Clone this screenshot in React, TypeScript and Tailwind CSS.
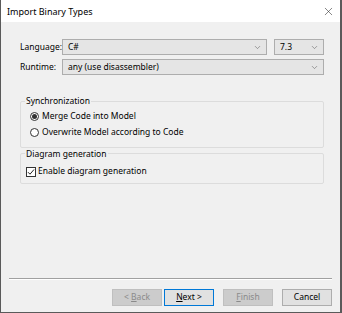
import { X, ChevronDown } from 'lucide-react';

// 콤보박스 (Windows 스타일)
function Combo({ value, className }: { value: string; className?: string }) {
  return (
    <div
      className={`h-[16px] bg-[#e5e5e5] border border-[#adadad] flex items-center justify-between pl-[5px] pr-[4px] ${className ?? ''}`}
    >
      <span className="text-[#000]">{value}</span>
      <ChevronDown size={9} strokeWidth={1.5} className="text-[#606060]" />
    </div>
  );
}

function Radio({ checked, label }: { checked?: boolean; label: string }) {
  return (
    <label className="flex items-center gap-[3px] h-[16px]">
      <span className="w-[9px] h-[9px] rounded-full border border-[#333] bg-white flex items-center justify-center">
        {checked && <span className="w-[5px] h-[5px] rounded-full bg-[#333]" />}
      </span>
      <span>{label}</span>
    </label>
  );
}

function Button({ label, disabled, primary }: { label: React.ReactNode; disabled?: boolean; primary?: boolean }) {
  return (
    <button
      className={`w-[50px] h-[17px] flex items-center justify-center border ${
        disabled
          ? 'bg-[#cccccc] border-[#bfbfbf] text-[#8a8a8a]'
          : primary
          ? 'bg-[#e1e1e1] border-[#0078d7] text-black'
          : 'bg-[#e1e1e1] border-[#adadad] text-black'
      }`}
    >
      {label}
    </button>
  );
}

export default function App() {
  return (
    <div
      className="w-[342px] h-[313px] flex flex-col border-l border-r-2 border-b border-[#5a5a5a] text-[8.5px] leading-none text-[#000]"
      style={{ fontFamily: '"Noto Sans", "Open Sans", sans-serif' }}
    >
      {/* 타이틀바 */}
      <div className="h-[22px] bg-white flex items-center justify-between pl-[6px] pr-[5px] shrink-0">
        <span className="text-[9px]">Import Binary Types</span>
        <X size={13} strokeWidth={1} className="text-[#222]" />
      </div>

      {/* 본문 */}
      <div className="flex-1 bg-[#f0f0f0] flex flex-col">
        <div className="pt-[17px] pl-[19px] pr-[16px] flex flex-col gap-[4px]">
          <div className="flex items-center">
            <span className="w-[42px]">Language:</span>
            <Combo value="C#" className="flex-1" />
            <Combo value="7.3" className="w-[50px] ml-[7px]" />
          </div>
          <div className="flex items-center">
            <span className="w-[42px]">Runtime:</span>
            <Combo value="any (use disassembler)" className="flex-1" />
          </div>
        </div>

        {/* 동기화 그룹 */}
        <fieldset className="mt-[22px] ml-[19px] mr-[16px] border border-[#dcdcdc] rounded-[2px] pl-[9px] pb-[6px] pt-[3px]">
          <legend className="ml-[-5px] px-[1px]">Synchronization</legend>
          <Radio checked label="Merge Code into Model" />
          <Radio label="Overwrite Model according to Code" />
        </fieldset>

        {/* 다이어그램 그룹 */}
        <fieldset className="mt-[2px] ml-[19px] mr-[16px] border border-[#dcdcdc] rounded-[2px] pl-[5px] pb-[4px] pt-[6px]">
          <legend className="ml-[-1px] px-[1px]">Diagram generation</legend>
          <label className="flex items-center gap-[2px] h-[15px]">
            <span className="w-[10px] h-[10px] border border-[#333] bg-white flex items-center justify-center">
              <svg width="8" height="8" viewBox="0 0 8 8">
                <path d="M1 4.2 L3 6.2 L7 1.5" fill="none" stroke="#222" strokeWidth="1" />
              </svg>
            </span>
            <span>Enable diagram generation</span>
          </label>
        </fieldset>

        <div className="flex-1" />

        {/* 구분선 */}
        <div className="mx-[8px] border-t border-[#a0a0a0] border-b border-b-white" />

        {/* 버튼 */}
        <div className="h-[32px] flex items-start justify-end pr-[8px] pt-[9px]">
          <Button disabled label={<span>&lt; <u>B</u>ack</span>} />
          <div className="ml-[2px]">
            <Button primary label={<span><u>N</u>ext &gt;</span>} />
          </div>
          <div className="ml-[9px]">
            <Button disabled label={<span><u>F</u>inish</span>} />
          </div>
          <div className="ml-[9px]">
            <Button label="Cancel" />
          </div>
        </div>
      </div>
    </div>
  );
}
